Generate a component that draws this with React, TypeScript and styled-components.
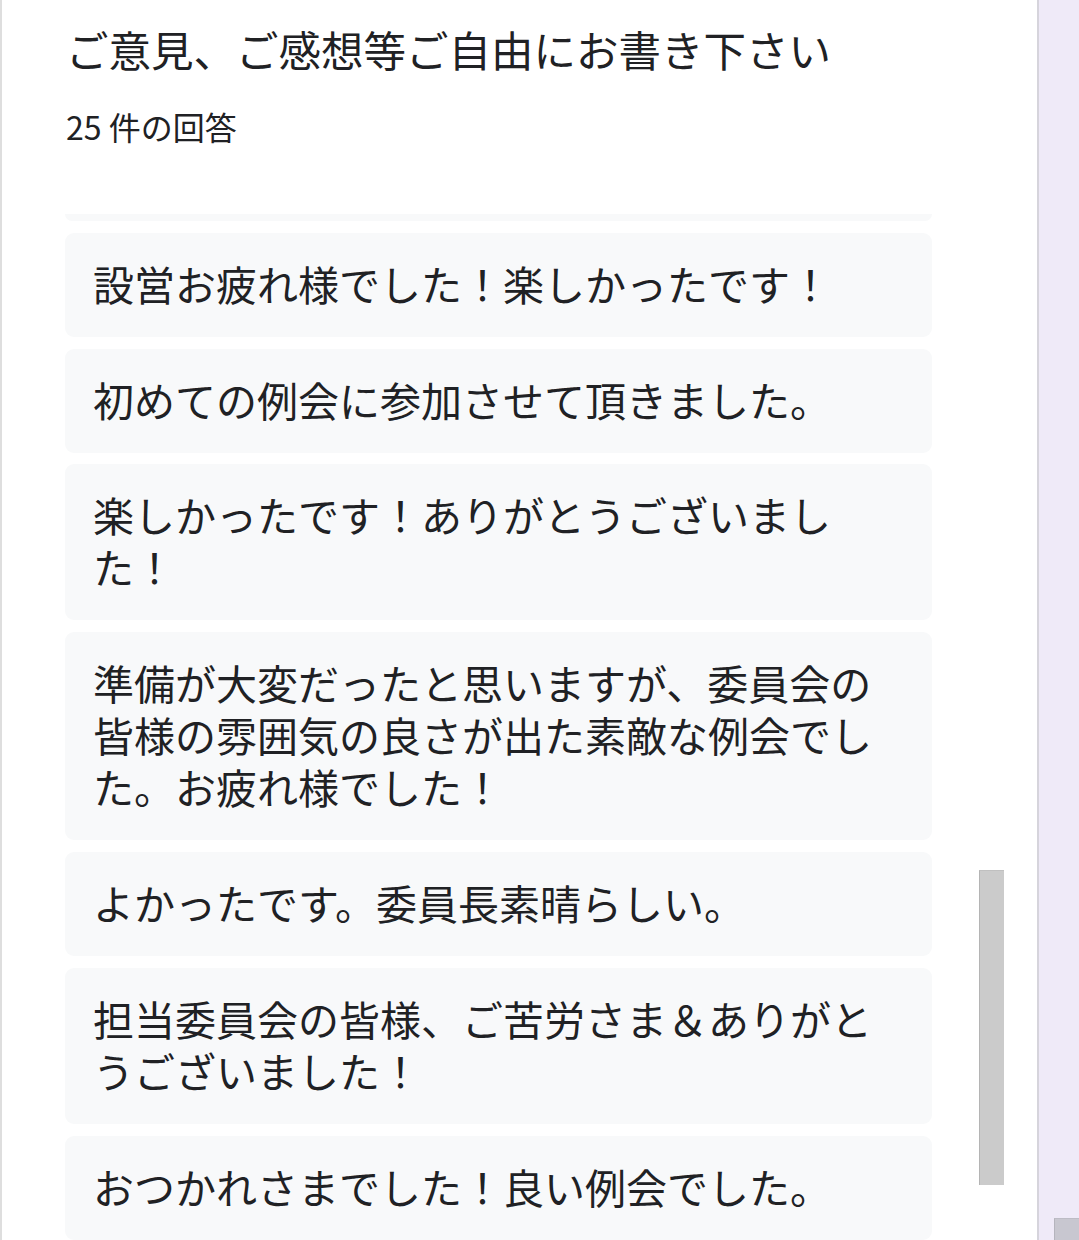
import React from "react";
import styled, { createGlobalStyle } from "styled-components";

const GlobalStyle = createGlobalStyle`
  html, body {
    margin: 0;
    padding: 0;
    background: #efeaf8;
    font-family: "Noto Sans CJK JP", "Noto Sans", Roboto, sans-serif;
    color: #202124;
  }
  * { box-sizing: border-box; }
`;

const Page = styled.div`
  display: flex;
  width: 1079px;
  height: 1240px;
  overflow: hidden;
`;

const Panel = styled.section`
  position: relative;
  width: 1039px;
  height: 1240px;
  flex: none;
  background: #ffffff;
  border-left: 2px solid #dedede;
  border-right: 2px solid #d6d4dc;
  display: flex;
  flex-direction: column;
  overflow: hidden;
`;

const Header = styled.header`
  padding: 21px 0 0 64px;
  height: 214px;
  flex: none;
`;

const Title = styled.h1`
  margin: 0;
  font-size: 42.5px;
  font-weight: 400;
  line-height: 56px;
  letter-spacing: 0;
  color: #202124;
`;

const Count = styled.div`
  margin-top: 29px;
  font-size: 32px;
  line-height: 40px;
  color: #202124;
`;

const ListViewport = styled.div`
  flex: 1;
  overflow: hidden;
  padding-left: 63px;
`;

const List = styled.div`
  display: flex;
  flex-direction: column;
  gap: 11.8px;
  width: 867px;
`;

const CardTail = styled.div`
  height: 7px;
  background: #f8f9fa;
  border-radius: 0 0 9px 9px;
`;

const Card = styled.div`
  background: #f8f9fa;
  border-radius: 9px;
  padding: 24px 28px 28px 28px;
  font-size: 41px;
  line-height: 52px;
  color: #202124;
  word-break: break-all;
  line-break: strict;
`;

const Thumb = styled.div<{ $top: number; $left: number; $height: number }>`
  position: absolute;
  top: ${(p) => p.$top}px;
  left: ${(p) => p.$left}px;
  width: 25px;
  height: ${(p) => p.$height}px;
  background: #cbcbcb;
  border-left: 1px solid #b4b4b4;
  border-top: 1px solid #c0c0c0;
`;

const PageThumb = styled.div`
  position: fixed;
  top: 1218px;
  left: 1054px;
  width: 25px;
  height: 30px;
  background: #c8c7d0;
  border-left: 1px solid #b5b4bd;
  border-top: 1px solid #bdbcc5;
`;

const responses = [
  "設営お疲れ様でした！楽しかったです！",
  "初めての例会に参加させて頂きました。",
  "楽しかったです！ありがとうございました！",
  "準備が大変だったと思いますが、委員会の皆様の雰囲気の良さが出た素敵な例会でした。お疲れ様でした！",
  "よかったです。委員長素晴らしい。",
  "担当委員会の皆様、ご苦労さま＆ありがとうございました！",
  "おつかれさまでした！良い例会でした。",
];

export default function App() {
  return (
    <>
      <GlobalStyle />
      <Page>
        <Panel>
          <Header>
            <Title>ご意見、ご感想等ご自由にお書き下さい</Title>
            <Count>25 件の回答</Count>
          </Header>
          <ListViewport>
            <List>
              <CardTail />
              {responses.map((r, i) => (
                <Card key={i}>{r}</Card>
              ))}
            </List>
          </ListViewport>
          <Thumb $top={870} $left={977} $height={315} />
        </Panel>
      </Page>
      <PageThumb />
    </>
  );
}
